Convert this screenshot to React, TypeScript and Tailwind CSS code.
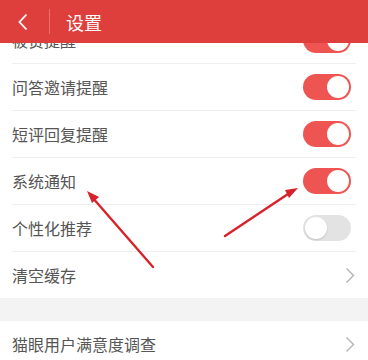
import React from "react";

const FONT = { fontFamily: '"Noto Sans CJK SC", "Noto Sans", sans-serif' };

function Toggle({ on }: { on: boolean }) {
  return on ? (
    <div className="w-[48px] h-[26px] rounded-full bg-[#ee5451] flex items-center justify-end px-[2px]">
      <div className="w-[22px] h-[22px] rounded-full bg-white" />
    </div>
  ) : (
    <div className="w-[48px] h-[26px] rounded-full bg-[#e3e3e3] flex items-center justify-start px-[2px]">
      <div className="w-[22px] h-[22px] rounded-full bg-white shadow-[0_1px_2px_rgba(0,0,0,0.15)]" />
    </div>
  );
}

function Chevron() {
  return (
    <svg width="10" height="17" viewBox="0 0 10 17" className="mr-[1px]">
      <path d="M1.5 1.5 L8.5 8.5 L1.5 15.5" fill="none" stroke="#b3b3b3" strokeWidth="1.4" />
    </svg>
  );
}

function Row({ label, right, border = true, rightPad = "pr-[5px]" }: { label: string; right: React.ReactNode; border?: boolean; rightPad?: string }) {
  return (
    <div className="mx-3">
      <div className={`h-[46px] flex items-center justify-between ${rightPad}`}>
        <span className="text-[16px] text-[#555555] leading-none">{label}</span>
        {right}
      </div>
      {border && <div className="h-px bg-[#eeeeee]" />}
    </div>
  );
}

export default function App() {
  return (
    <div className="relative w-[368px] h-[360px] overflow-hidden bg-white flex flex-col" style={FONT}>
      <div className="h-[43px] shrink-0 bg-[#df3f3c] flex items-center relative z-10">
        <div className="w-[49px] flex justify-center">
          <svg width="12" height="18" viewBox="0 0 12 18" className="ml-[-4px]">
            <path d="M9.5 1.5 L2.5 9 L9.5 16.5" fill="none" stroke="#ffffff" strokeWidth="1.8" />
          </svg>
        </div>
        <div className="w-px h-[25px] bg-[#e9706c]" />
        <span className="ml-4 text-[18px] text-white leading-none">设置</span>
      </div>
      <div className="flex-1 overflow-hidden">
        <div className="-mt-[26px]">
          <Row label="被赞提醒" right={<Toggle on />} />
          <Row label="问答邀请提醒" right={<Toggle on />} />
          <Row label="短评回复提醒" right={<Toggle on />} />
          <Row label="系统通知" right={<Toggle on />} />
          <Row label="个性化推荐" right={<Toggle on={false} />} />
          <Row label="清空缓存" right={<Chevron />} border={false} rightPad="pr-0" />
          <div className="h-[23px] bg-[#f3f3f3]" />
          <Row label="猫眼用户满意度调查" right={<Chevron />} border={false} rightPad="pr-0" />
        </div>
      </div>
      <svg className="absolute inset-0 pointer-events-none z-20" width="368" height="360" viewBox="0 0 368 360">
        <line x1="153" y1="267" x2="92" y2="197" stroke="#d8222b" strokeWidth="2.4" strokeLinecap="round" />
        <polygon points="87,191 99,197 92,203" fill="#d8222b" />
        <line x1="225" y1="236" x2="291" y2="192" stroke="#d8222b" strokeWidth="2.4" strokeLinecap="round" />
        <polygon points="298,188 289,198 285,190" fill="#d8222b" />
      </svg>
    </div>
  );
}
